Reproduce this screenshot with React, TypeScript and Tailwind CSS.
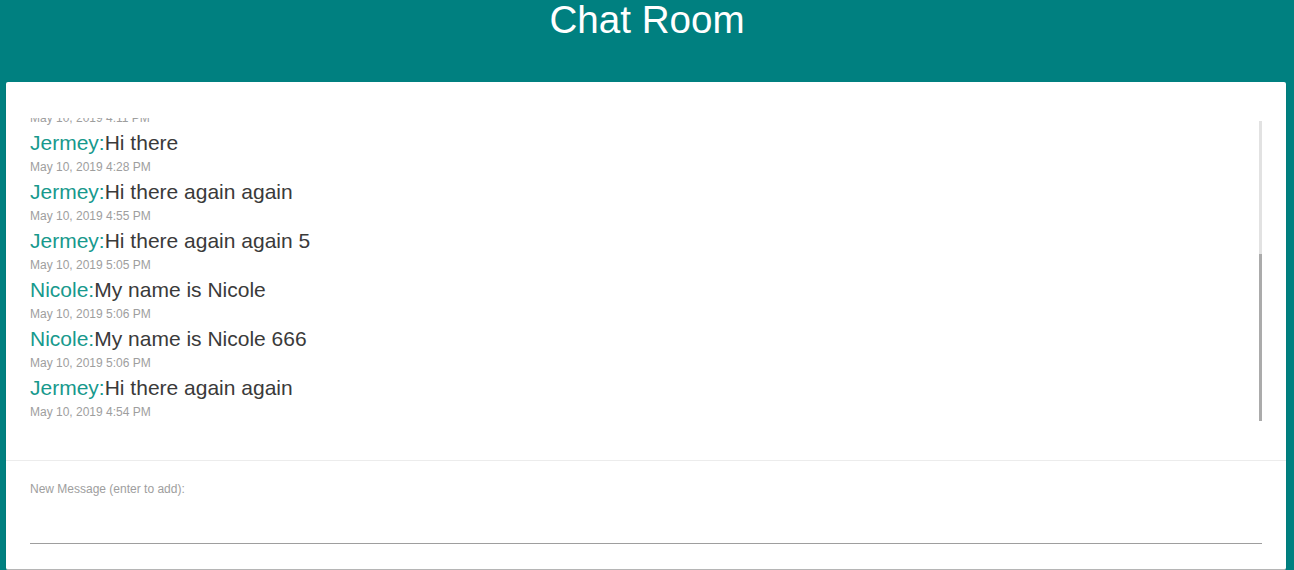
import React from "react";

const messages = [
  { name: "Jermey", text: "Hi there", date: "May 10, 2019 4:11 PM" },
  { name: "Jermey", text: "Hi there", date: "May 10, 2019 4:28 PM" },
  { name: "Jermey", text: "Hi there again again", date: "May 10, 2019 4:55 PM" },
  { name: "Jermey", text: "Hi there again again 5", date: "May 10, 2019 5:05 PM" },
  { name: "Nicole", text: "My name is Nicole", date: "May 10, 2019 5:06 PM" },
  { name: "Nicole", text: "My name is Nicole 666", date: "May 10, 2019 5:06 PM" },
  { name: "Jermey", text: "Hi there again again", date: "May 10, 2019 4:54 PM" },
];

export default function App() {
  return (
    <div
      className="h-[570px] w-full overflow-hidden bg-[#008080]"
      style={{ fontFamily: '"Liberation Sans", Arial, sans-serif' }}
    >
      <div className="flex h-[82px] justify-center">
        <h1 className="-mt-[2px] h-[44px] text-[38.6px] leading-[44px] text-white">
          Chat Room
        </h1>
      </div>
      <div className="ml-[6px] flex h-[488px] w-[1280px] flex-col rounded-[2px] border-b border-[#b5b5b5] bg-white shadow-[0_2px_2px_rgba(0,0,0,0.14)]">
        <div className="flex px-[24px] pt-[36px]">
          <div className="h-[303px] flex-1 overflow-hidden">
            <div className="-mt-[36px]">
              {messages.map((m, i) => (
                <div key={i} className="mb-[5px]">
                  <div className="text-[21px] leading-[24px] text-[#3a3a3a]">
                    <span className="text-[#17998d]">{m.name}:</span>
                    {m.text}
                  </div>
                  <div className="mt-[4px] text-[12px] leading-[16px] text-[#9e9e9e]">
                    {m.date}
                  </div>
                </div>
              ))}
            </div>
          </div>
          <div className="mt-[3px] flex h-[300px] w-[3px] flex-col">
            <div className="h-[133px] bg-[#e2e2e2]" />
            <div className="flex-1 bg-[#ababab]" />
          </div>
        </div>
        <div className="mt-[39px] h-px bg-[#ececec]" />
        <div className="px-[24px] pt-[20px]">
          <div className="text-[12px] leading-[16px] text-[#9e9e9e]">
            New Message (enter to add):
          </div>
          <input
            className="mt-[10px] h-[37px] w-full border-b border-[#9e9e9e] bg-transparent text-[16px] outline-none"
            type="text"
          />
        </div>
      </div>
    </div>
  );
}
